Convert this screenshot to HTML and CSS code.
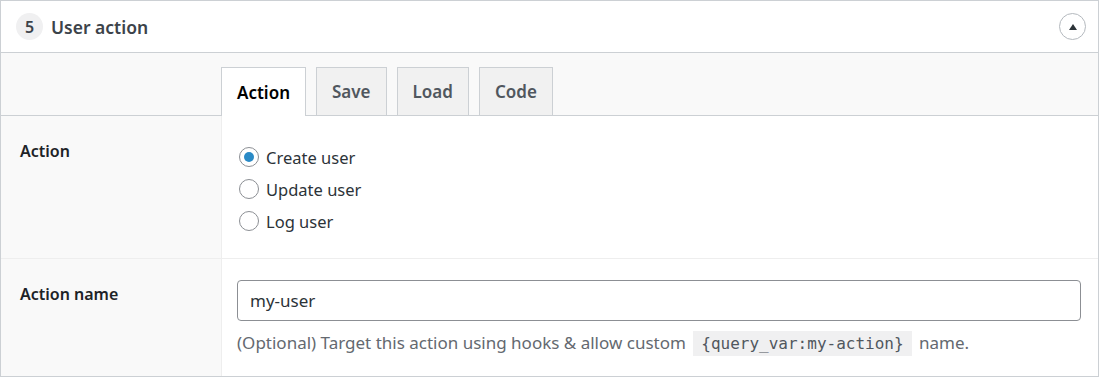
FILE: index.html
```html
<!DOCTYPE html>
<html lang="en">
<head>
    <meta charset="UTF-8">
    <title>User action</title>
    <link rel="stylesheet" href="styles.css">
</head>
<body>

    <div class="postbox">
        <!-- Header -->
        <div class="postbox-header">
            <span class="step">5</span>
            <h2>User action</h2>
            <button class="toggle" type="button" aria-label="Collapse">
                <svg width="10" height="8" viewBox="0 0 10 8"><path d="M5 1 L9 7 L1 7 Z" fill="#2c3338"/></svg>
            </button>
        </div>

        <!-- Tabs -->
        <div class="tabs-row">
            <ul class="tabs">
                <li class="tab active">Action</li>
                <li class="tab">Save</li>
                <li class="tab">Load</li>
                <li class="tab">Code</li>
            </ul>
        </div>

        <div class="field">
            <div class="field-label">Action</div>
            <div class="field-input radios">
                <label class="radio"><input type="radio" name="action" checked> Create user</label>
                <label class="radio"><input type="radio" name="action"> Update user</label>
                <label class="radio"><input type="radio" name="action"> Log user</label>
            </div>
        </div>

        <div class="field">
            <div class="field-label">Action name</div>
            <div class="field-input">
                <input class="text-input" type="text" value="my-user">
                <p class="description">(Optional) Target this action using hooks &amp; allow custom <code>{query_var:my-action}</code> name.</p>
            </div>
        </div>
    </div>

</body>
</html>
```

FILE: styles.css
```css
/* Reset */
* {
    margin: 0;
    padding: 0;
    box-sizing: border-box;
}

body {
    font-family: 'Noto Sans', 'Open Sans', sans-serif;
    font-size: 16px;
    color: #1d2327;
    background: #ffffff;
}

/* Box */
.postbox {
    width: 1099px;
    height: 377px;
    border: 1px solid #ccd0d4;
    background: #ffffff;
    overflow: hidden;
}

.postbox-header {
    display: flex;
    align-items: center;
    height: 52px;
    padding: 0 12px 0 15px;
    border-bottom: 1px solid #ccd0d4;
}

.step {
    width: 27px;
    height: 27px;
    border-radius: 50%;
    background: #f0f0f1;
    color: #3c434a;
    font-size: 16px;
    font-weight: 600;
    display: flex;
    align-items: center;
    justify-content: center;
    margin-right: 8px;
}

.postbox-header h2 {
    flex: 1;
    font-size: 17.5px;
    font-weight: 600;
    color: #3c434a;
}

.toggle {
    width: 27px;
    height: 27px;
    border-radius: 50%;
    border: 1px solid #b4b9be;
    background: #ffffff;
    display: flex;
    align-items: center;
    justify-content: center;
    cursor: pointer;
}

/* Tabs */
.tabs-row {
    background: #f9f9f9;
    padding: 14px 0 0 220px;
    border-bottom: 1px solid #ccd0d4;
}

.tabs {
    list-style: none;
    display: flex;
    gap: 10px;
    margin-bottom: -1px;
}

.tab {
    height: 48px;
    padding: 0 15px;
    display: flex;
    align-items: center;
    font-size: 17px;
    font-weight: 600;
    color: #50575e;
    background: #f1f1f1;
    border: 1px solid #ccd0d4;
    border-bottom: none;
}

.tab.active {
    background: #ffffff;
    color: #000000;
    height: 49px;
}

/* Fields */
.field {
    display: flex;
    border-bottom: 1px solid #eeeeee;
}

.field:last-child {
    border-bottom: none;
}

.field-label {
    width: 221px;
    flex-shrink: 0;
    background: #f9f9f9;
    border-right: 1px solid #eeeeee;
    padding: 24px 19px;
    font-size: 16px;
    font-weight: 600;
    color: #1d2327;
    line-height: 22px;
}

.field-input {
    flex: 1;
    padding: 21px 17px 21px 15px;
}

.radios {
    padding-top: 25px;
    padding-bottom: 21px;
}

.radio {
    display: flex;
    align-items: center;
    height: 32px;
    font-size: 16.5px;
    color: #2c3338;
}

.radio input {
    appearance: none;
    width: 20px;
    height: 20px;
    border: 1px solid #8c8f94;
    border-radius: 50%;
    margin: 0 7px 0 2px;
    background: #ffffff;
    display: flex;
    align-items: center;
    justify-content: center;
}

.radio input:checked::before {
    content: '';
    width: 10px;
    height: 10px;
    border-radius: 50%;
    background: #2a8ac6;
}

.text-input {
    display: block;
    width: 100%;
    height: 41px;
    padding: 0 12px;
    font-family: inherit;
    font-size: 17px;
    color: #2c3338;
    border: 1px solid #8c8f94;
    border-radius: 4px;
}

.description {
    margin-top: 10px;
    font-size: 17px;
    color: #646970;
    line-height: 24px;
}

.description code {
    font-family: 'DejaVu Sans Mono', monospace;
    font-size: 16px;
    background: #f0f0f1;
    padding: 3px 8px;
    margin: 0 3px;
    color: #50575e;
}
```
